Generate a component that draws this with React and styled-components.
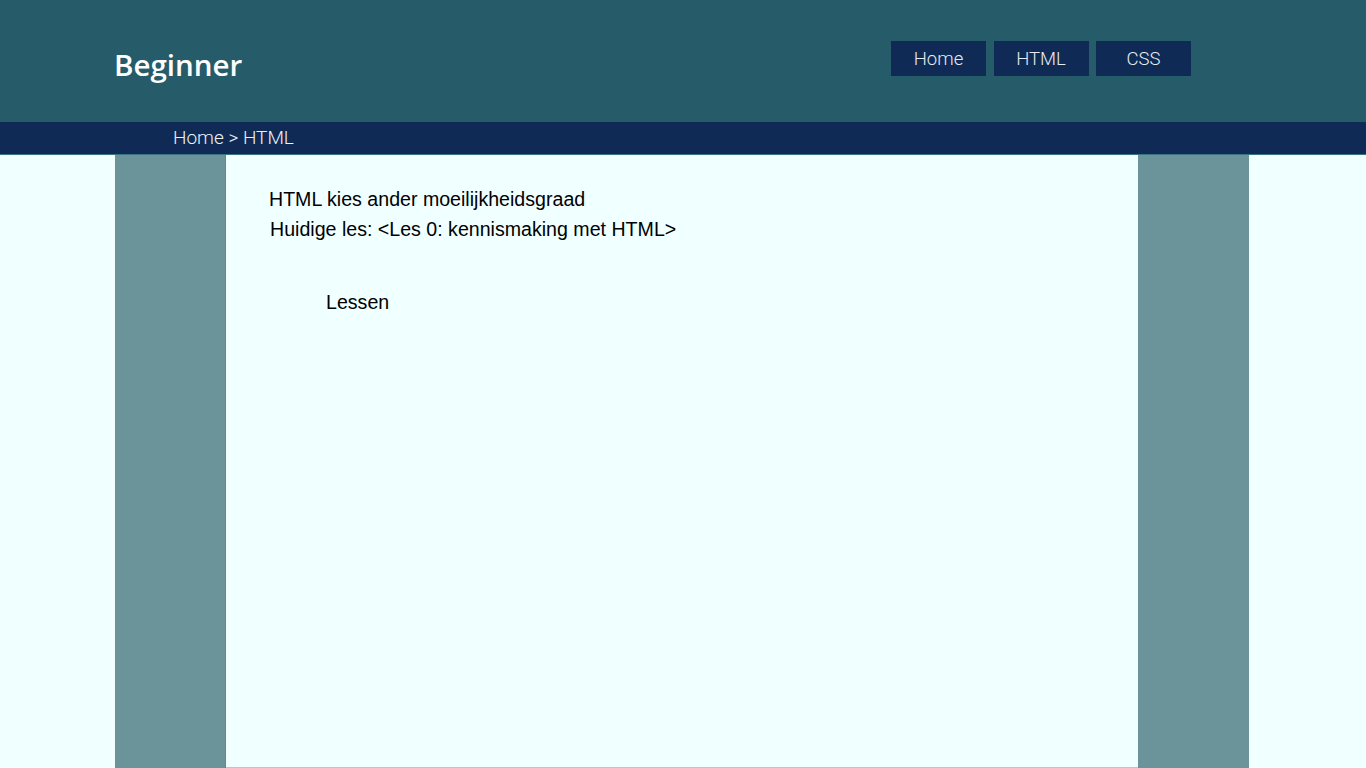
import React from 'react';
import styled, { createGlobalStyle } from 'styled-components';

const GlobalStyle = createGlobalStyle`
  html, body {
    margin: 0;
    padding: 0;
    background-color: #f0ffff;
  }
  * {
    box-sizing: border-box;
  }
`;

const Header = styled.header`
  height: 122px;
  background-color: #265c6a;
  display: flex;
  align-items: flex-start;
  justify-content: space-between;
  padding: 0 175px 0 114px;
`;

const Brand = styled.h1`
  margin: 0;
  padding-top: 44px;
  font-family: "Open Sans", "Noto Sans", sans-serif;
  font-weight: 600;
  font-size: 29.5px;
  line-height: 42px;
  color: #ffffff;
`;

const Nav = styled.nav`
  display: flex;
  gap: 7.5px;
  padding-top: 41px;
`;

const NavButton = styled.a`
  width: 95px;
  height: 35px;
  display: flex;
  align-items: center;
  justify-content: center;
  background-color: #102a56;
  color: #e8ecf0;
  font-family: Roboto, "Noto Sans", sans-serif;
  font-weight: 300;
  font-size: 18.5px;
  text-decoration: none;
  cursor: pointer;
`;

const Breadcrumb = styled.div`
  height: 33px;
  background-color: #102a56;
  border-bottom: 1px solid #3a7383;
  padding-left: 173px;
  font-family: Roboto, "Noto Sans", sans-serif;
  font-weight: 300;
  font-size: 19px;
  line-height: 31px;
  color: #eef2f5;
`;

const Main = styled.main`
  display: grid;
  grid-template-columns: 115px 111px 912px 111px 1fr;
  min-height: calc(100vh - 155px);
`;

const Side = styled.aside`
  background-color: #6a939a;
  border-right: ${(p) => (p.left ? '1px solid #5f888f' : 'none')};
`;

const Content = styled.section`
  padding: 29px 0 0 43px;
  font-family: "Liberation Sans", Arial, sans-serif;
  font-size: 19.6px;
  line-height: 30px;
  color: #000000;
  border-bottom: 1px solid #b9c7c9;
`;

const Line = styled.p`
  margin: 0;
  padding-left: ${(p) => p.indent || 0}px;
`;

const Lessons = styled.h2`
  margin: 43px 0 0 57px;
  font-weight: 400;
  font-size: 19.6px;
  line-height: 30px;
`;

export default function App() {
  return (
    <>
      <GlobalStyle />
      <Header>
        <Brand>Beginner</Brand>
        <Nav>
          <NavButton>Home</NavButton>
          <NavButton>HTML</NavButton>
          <NavButton>CSS</NavButton>
        </Nav>
      </Header>
      <Breadcrumb>Home &gt; HTML</Breadcrumb>
      <Main>
        <div />
        <Side left />
        <Content>
          <Line>HTML kies ander moeilijkheidsgraad</Line>
          <Line indent={1}>Huidige les: &lt;Les 0: kennismaking met HTML&gt;</Line>
          <Lessons>Lessen</Lessons>
        </Content>
        <Side />
        <div />
      </Main>
    </>
  );
}
